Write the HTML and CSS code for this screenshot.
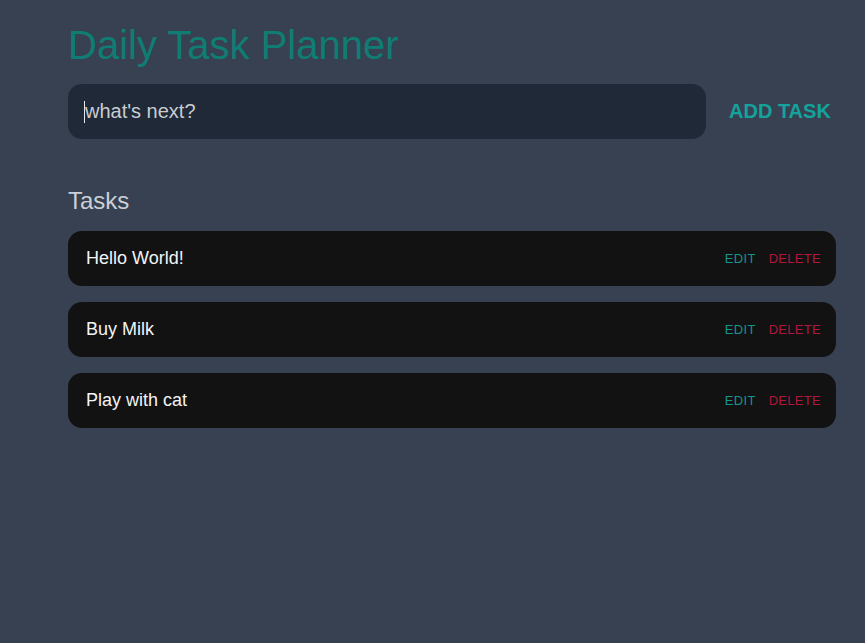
FILE: index.html
```html
<!DOCTYPE html>
<html>
<head>
<meta charset="utf-8">
<link rel="stylesheet" href="styles.css">
</head>
<body>
<main class="app">
  <h1 class="title">Daily Task Planner</h1>
  <form class="add-form">
    <div class="input-box"><span class="caret"></span><span class="placeholder">what's next?</span></div>
    <button type="button" class="add-btn">ADD TASK</button>
  </form>
  <h2 class="section">Tasks</h2>
  <ul class="tasks">
    <li class="task"><span class="task-name">Hello World!</span><span class="actions"><button class="edit">EDIT</button><button class="delete">DELETE</button></span></li>
    <li class="task"><span class="task-name">Buy Milk</span><span class="actions"><button class="edit">EDIT</button><button class="delete">DELETE</button></span></li>
    <li class="task"><span class="task-name">Play with cat</span><span class="actions"><button class="edit">EDIT</button><button class="delete">DELETE</button></span></li>
  </ul>
</main>
</body>
</html>
```
FILE: styles.css
```css
html, body {
  margin: 0;
  padding: 0;
  background: #374151;
  font-family: "Liberation Sans", Arial, sans-serif;
  height: 100%;
}
.app {
  width: 768px;
  padding: 22px 0 0 68px;
}
.title {
  margin: 0;
  font-size: 40px;
  font-weight: 400;
  line-height: 46px;
  color: #0f7d73;
}
.add-form {
  display: flex;
  align-items: center;
  margin-top: 16px;
}
.input-box {
  flex: 0 0 638px;
  height: 55px;
  box-sizing: border-box;
  background: #1f2937;
  border-radius: 14px;
  display: flex;
  align-items: center;
  padding-left: 16px;
}
.caret {
  width: 1px;
  height: 22px;
  background: #e5e7eb;
}
.placeholder {
  font-size: 20px;
  color: #c9ccd1;
}
.add-btn {
  margin-left: 23px;
  background: none;
  border: none;
  padding: 0;
  font-family: inherit;
  font-size: 20px;
  font-weight: 700;
  color: #14a39c;
  letter-spacing: 0;
}
.section {
  margin: 48px 0 0;
  font-size: 24px;
  font-weight: 400;
  line-height: 28px;
  color: #cbd0d8;
}
.tasks {
  list-style: none;
  margin: 16px 0 0;
  padding: 0;
  display: flex;
  flex-direction: column;
  gap: 16px;
}
.task {
  height: 55px;
  box-sizing: border-box;
  background: #121212;
  border-radius: 14px;
  display: flex;
  align-items: center;
  justify-content: space-between;
  padding: 0 15px 0 18px;
}
.task-name {
  font-size: 18px;
  color: #f3f4f6;
}
.actions {
  display: flex;
  gap: 13px;
}
.actions button {
  background: none;
  border: none;
  padding: 0;
  font-family: inherit;
  font-size: 13px;
  letter-spacing: 0.3px;
}
.edit { color: #14948d; }
.delete { color: #b0173f; }
```
